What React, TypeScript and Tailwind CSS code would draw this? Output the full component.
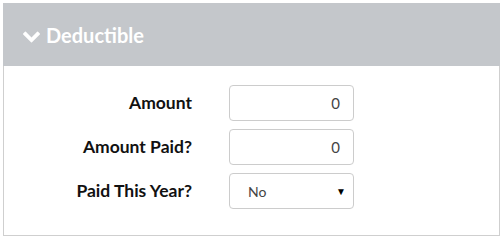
import React from "react";

export default function App() {
  return (
    <div className="w-[503px] h-[241px] bg-white p-[3px] pr-[3px]" style={{ fontFamily: "Lato, 'Open Sans', sans-serif" }}>
      <div className="w-[497px] h-[233px] border border-[#cfcfcf] flex flex-col">
        <div className="h-[63px] bg-[#c4c7cb] flex items-center pl-[20px] gap-[6px] -mx-px -mt-px">
          <svg width="17" height="12" viewBox="90 150 1612 1050" className="mt-[4px]">
            <path
              fill="#ffffff"
              d="M1683 440l-742 741q-19 19-45 19t-45-19L109 440q-19-19-19-45.5t19-45.5l166-165q19-19 45-19t45 19l531 531 531-531q19-19 45-19t45 19l166 165q19 19 19 45.5t-19 45.5z"
            />
          </svg>
          <span className="text-white font-bold text-[20px] leading-none">Deductible</span>
        </div>
        <div className="grid grid-cols-[188px_125px] gap-x-[37px] gap-y-[8px] pt-[19px] items-center">
          <div className="text-right font-bold text-[17.5px] text-[#111]">Amount</div>
          <div className="h-[36px] border border-[#cccccc] rounded-[4px] flex items-center justify-end pr-[13px] text-[15px] text-[#444]">0</div>
          <div className="text-right font-bold text-[17.5px] text-[#111]">Amount Paid?</div>
          <div className="h-[36px] border border-[#cccccc] rounded-[4px] flex items-center justify-end pr-[13px] text-[15px] text-[#444]">0</div>
          <div className="text-right font-bold text-[17.5px] text-[#111]">Paid This Year?</div>
          <div className="h-[36px] border border-[#cccccc] rounded-[4px] flex items-center justify-between pl-[18px] pr-[7px] text-[14px] text-[#444]">
            <span>No</span>
            <span className="text-[10px] text-black">▼</span>
          </div>
        </div>
      </div>
    </div>
  );
}
